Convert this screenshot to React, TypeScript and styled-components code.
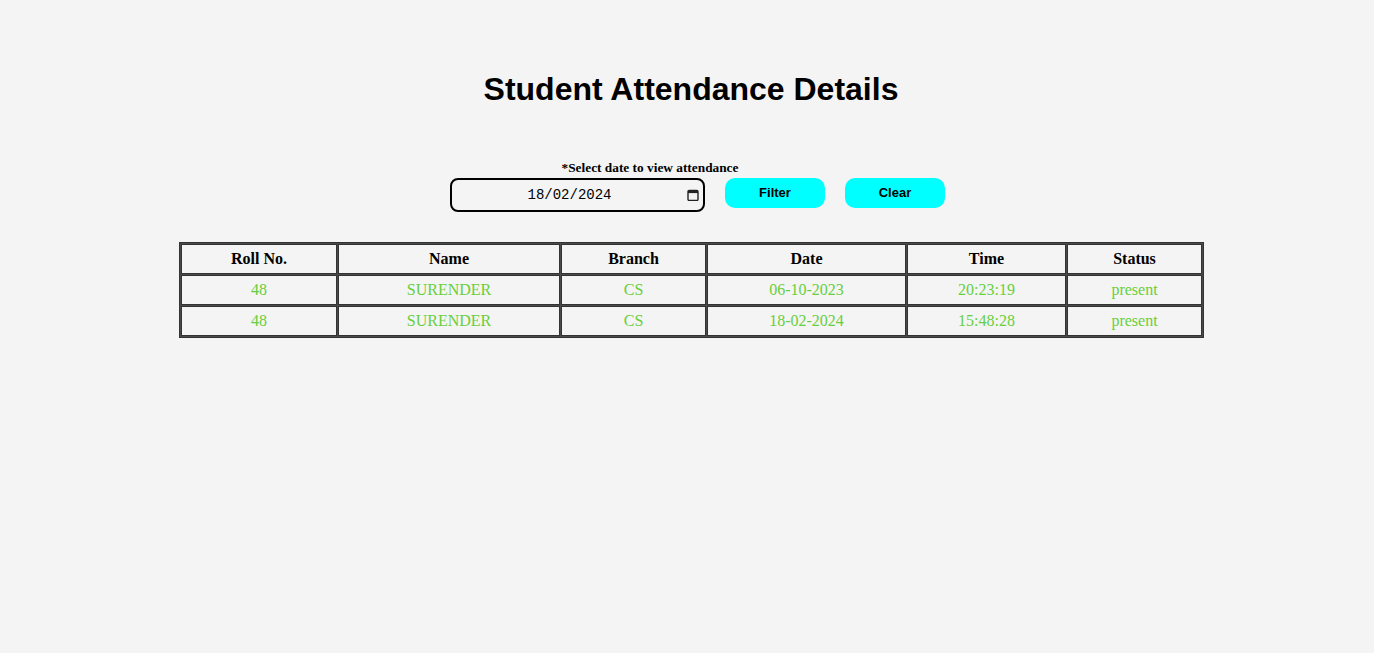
import React from "react";
import styled, { createGlobalStyle } from "styled-components";

const GlobalStyle = createGlobalStyle`
  html, body {
    background: #f4f4f4;
  }
  body {
    margin: 0 0 0 8px;
    font-family: "Liberation Serif", "Times New Roman", serif;
    color: #000;
  }
`;

const Page = styled.main`
  display: flex;
  flex-direction: column;
  align-items: center;
`;

const Title = styled.h1`
  margin: 71px 0 0;
  font-family: "Liberation Sans", Arial, sans-serif;
  font-size: 32px;
  line-height: 37px;
  font-weight: 700;
`;

const FilterForm = styled.form`
  margin-top: 52px;
  display: flex;
  flex-direction: column;
  align-items: center;
`;

const FieldLabel = styled.label`
  display: block;
  font-family: "Liberation Serif", "Times New Roman", serif;
  font-weight: 700;
  font-size: 13.33px;
  line-height: 15px;
  padding-right: 82px;
  margin-bottom: 3px;
`;

const Controls = styled.div`
  display: flex;
  align-items: flex-start;
  gap: 20px;
  padding-left: 13px;
`;

const DateField = styled.div`
  box-sizing: border-box;
  width: 255px;
  height: 34px;
  border: 2px solid #000;
  border-radius: 8px;
  display: flex;
  align-items: center;
  padding-right: 4px;
`;

const DateInput = styled.input`
  flex: 1;
  min-width: 0;
  border: none;
  background: transparent;
  outline: none;
  text-align: center;
  font-family: "Liberation Mono", "DejaVu Sans Mono", monospace;
  font-size: 14px;
  color: #000;
  padding: 0;
`;

const CalendarIcon = styled.svg`
  width: 12px;
  height: 12px;
  flex: none;
`;

const ActionButton = styled.button`
  width: 100px;
  height: 30px;
  border: none;
  border-radius: 10px;
  background: #00ffff;
  font-family: "Liberation Sans", Arial, sans-serif;
  font-weight: 700;
  font-size: 13px;
  color: #000;
  padding: 0 0 2px;
  cursor: pointer;
`;

const Table = styled.table`
  margin-top: 30px;
  margin-left: 1px;
  width: 1025px;
  table-layout: fixed;
  border: 1px solid #333;
  border-spacing: 1px;
  background: #4a4a4a;
`;

const HeadCell = styled.th<{ $w: number }>`
  box-sizing: border-box;
  width: ${(p) => p.$w}px;
  border: 1px solid #333;
  background: #f4f4f4;
  padding: 5px;
  font-size: 16px;
  line-height: 18px;
  font-weight: 700;
  text-align: center;
`;

const Cell = styled.td`
  border: 1px solid #333;
  background: #f4f4f4;
  padding: 5px;
  font-size: 16px;
  line-height: 18px;
  text-align: center;
  color: #68cf3c;
`;

const columns: [string, number][] = [
  ["Roll No.", 156],
  ["Name", 222],
  ["Branch", 145],
  ["Date", 199],
  ["Time", 159],
  ["Status", 135],
];

const rows = [
  ["48", "SURENDER", "CS", "06-10-2023", "20:23:19", "present"],
  ["48", "SURENDER", "CS", "18-02-2024", "15:48:28", "present"],
];

export default function App() {
  return (
    <>
      <GlobalStyle />
      <Page>
        <Title>Student Attendance Details</Title>
        <FilterForm onSubmit={(e) => e.preventDefault()}>
          <FieldLabel htmlFor="date">*Select date to view attendance</FieldLabel>
          <Controls>
            <DateField>
              <DateInput id="date" type="text" defaultValue="18/02/2024" readOnly />
              <CalendarIcon viewBox="0 0 12 12">
                <rect x="1" y="1.5" width="10" height="10" rx="1.2" fill="none" stroke="#222" strokeWidth="1.4" />
                <rect x="1" y="1.5" width="10" height="2.6" fill="#222" />
              </CalendarIcon>
            </DateField>
            <ActionButton type="submit">Filter</ActionButton>
            <ActionButton type="button">Clear</ActionButton>
          </Controls>
        </FilterForm>
        <Table>
          <thead>
            <tr>
              {columns.map(([name, w]) => (
                <HeadCell key={name} $w={w}>
                  {name}
                </HeadCell>
              ))}
            </tr>
          </thead>
          <tbody>
            {rows.map((r, i) => (
              <tr key={i}>
                {r.map((v, j) => (
                  <Cell key={j}>{v}</Cell>
                ))}
              </tr>
            ))}
          </tbody>
        </Table>
      </Page>
    </>
  );
}
